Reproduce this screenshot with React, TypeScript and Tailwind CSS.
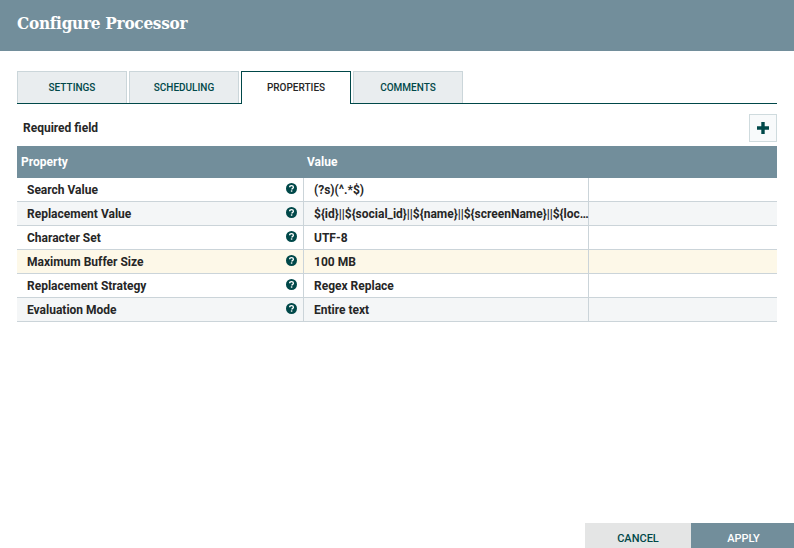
const tabs = ["SETTINGS", "SCHEDULING", "PROPERTIES", "COMMENTS"];

const rows = [
  { name: "Search Value", value: "(?s)(^.*$)", bg: "bg-white" },
  { name: "Replacement Value", value: "${id}||${social_id}||${name}||${screenName}||${loc…", bg: "bg-[#f4f6f7]" },
  { name: "Character Set", value: "UTF-8", bg: "bg-white" },
  { name: "Maximum Buffer Size", value: "100 MB", bg: "bg-[#fdf8e8]" },
  { name: "Replacement Strategy", value: "Regex Replace", bg: "bg-white" },
  { name: "Evaluation Mode", value: "Entire text", bg: "bg-[#f4f6f7]" },
];

const HelpIcon = () => (
  <svg viewBox="0 0 24 24" className="w-[11px] h-[11px]">
    <circle cx="12" cy="12" r="12" fill="#004849" />
    <path
      d="M8 9.5c0-2.4 1.8-3.7 4.1-3.7 2.3 0 4 1.4 4 3.4 0 1.7-1 2.4-2.1 3.1-.8.5-1.1.8-1.1 1.7"
      fill="none"
      stroke="#fff"
      strokeWidth="3"
    />
    <rect x="10.6" y="16" width="3.2" height="3" fill="#fff" />
  </svg>
);

export default function App() {
  return (
    <div className="w-[794px] h-[548px] bg-white flex flex-col overflow-hidden font-['Roboto',sans-serif]">
      {/* Header */}
      <div className="h-[51px] bg-[#728e9b] flex items-center pl-[17px] pb-[3px] shrink-0">
        <h1 className="text-white text-[17px] font-bold font-['DejaVu_Serif_Condensed','DejaVu_Serif',serif] tracking-[-0.25px]">Configure Processor</h1>
      </div>

      <div className="flex-1 flex flex-col px-[17px] pt-[20px]">
        {/* Tabs */}
        <div className="flex gap-[2px] h-[33px] border-b border-[#004849] shrink-0">
          {tabs.map((tab) =>
            tab === "PROPERTIES" ? (
              <div
                key={tab}
                className="w-[110px] h-[33px] pb-[1px] bg-white border border-b-0 border-[#004849] flex items-center justify-center text-[10px] font-medium text-[#262626]"
              >
                {tab}
              </div>
            ) : (
              <div
                key={tab}
                className="w-[110px] h-[32px] bg-[#e9edef] border border-b-0 border-[#cbd6da] flex items-center justify-center text-[10px] font-medium text-[#004849]"
              >
                {tab}
              </div>
            )
          )}
        </div>

        {/* Required field + add */}
        <div className="flex items-center justify-between h-[42px] shrink-0">
          <span className="pl-[6px] mt-[6px] text-[12px] font-bold text-[#262626]">Required field</span>
          <button className="w-[28px] h-[28px] mt-[6px] bg-[#f8fafb] border border-[#cfdbde] flex items-center justify-center">
            <svg viewBox="0 0 14 14" className="w-[14px] h-[14px]">
              <path d="M5.3 1h3.4v4.3H13v3.4H8.7V13H5.3V8.7H1V5.3h4.3z" fill="#004849" />
            </svg>
          </button>
        </div>

        {/* Table */}
        <div className="flex h-[32px] bg-[#728e9b] items-center text-white text-[12px] font-bold shrink-0">
          <div className="w-[286px] pl-[4px]">Property</div>
          <div className="pl-[4px]">Value</div>
        </div>
        {rows.map((row) => (
          <div key={row.name} className={`flex h-[24px] border-b border-[#cbd4d9] text-[12px] font-bold text-[#262626] ${row.bg}`}>
            <div className="w-[287px] pl-[10px] pr-[6px] flex items-center justify-between border-r border-[#cbd4d9]">
              <span>{row.name}</span>
              <span className="mb-[2px] flex"><HelpIcon /></span>
            </div>
            <div className="w-[285px] pl-[10px] flex items-center border-r border-[#cbd4d9]">
              <span className="whitespace-nowrap">{row.value}</span>
            </div>
          </div>
        ))}
      </div>

      {/* Footer buttons */}
      <div className="flex justify-end h-[25px] shrink-0">
        <button className="w-[106px] bg-[#e4e5e5] text-[#004849] text-[11px] font-medium pt-[8px]">CANCEL</button>
        <button className="w-[103px] pl-[2px] bg-[#728e9b] text-white text-[11px] font-medium pt-[8px]">APPLY</button>
      </div>
    </div>
  );
}
